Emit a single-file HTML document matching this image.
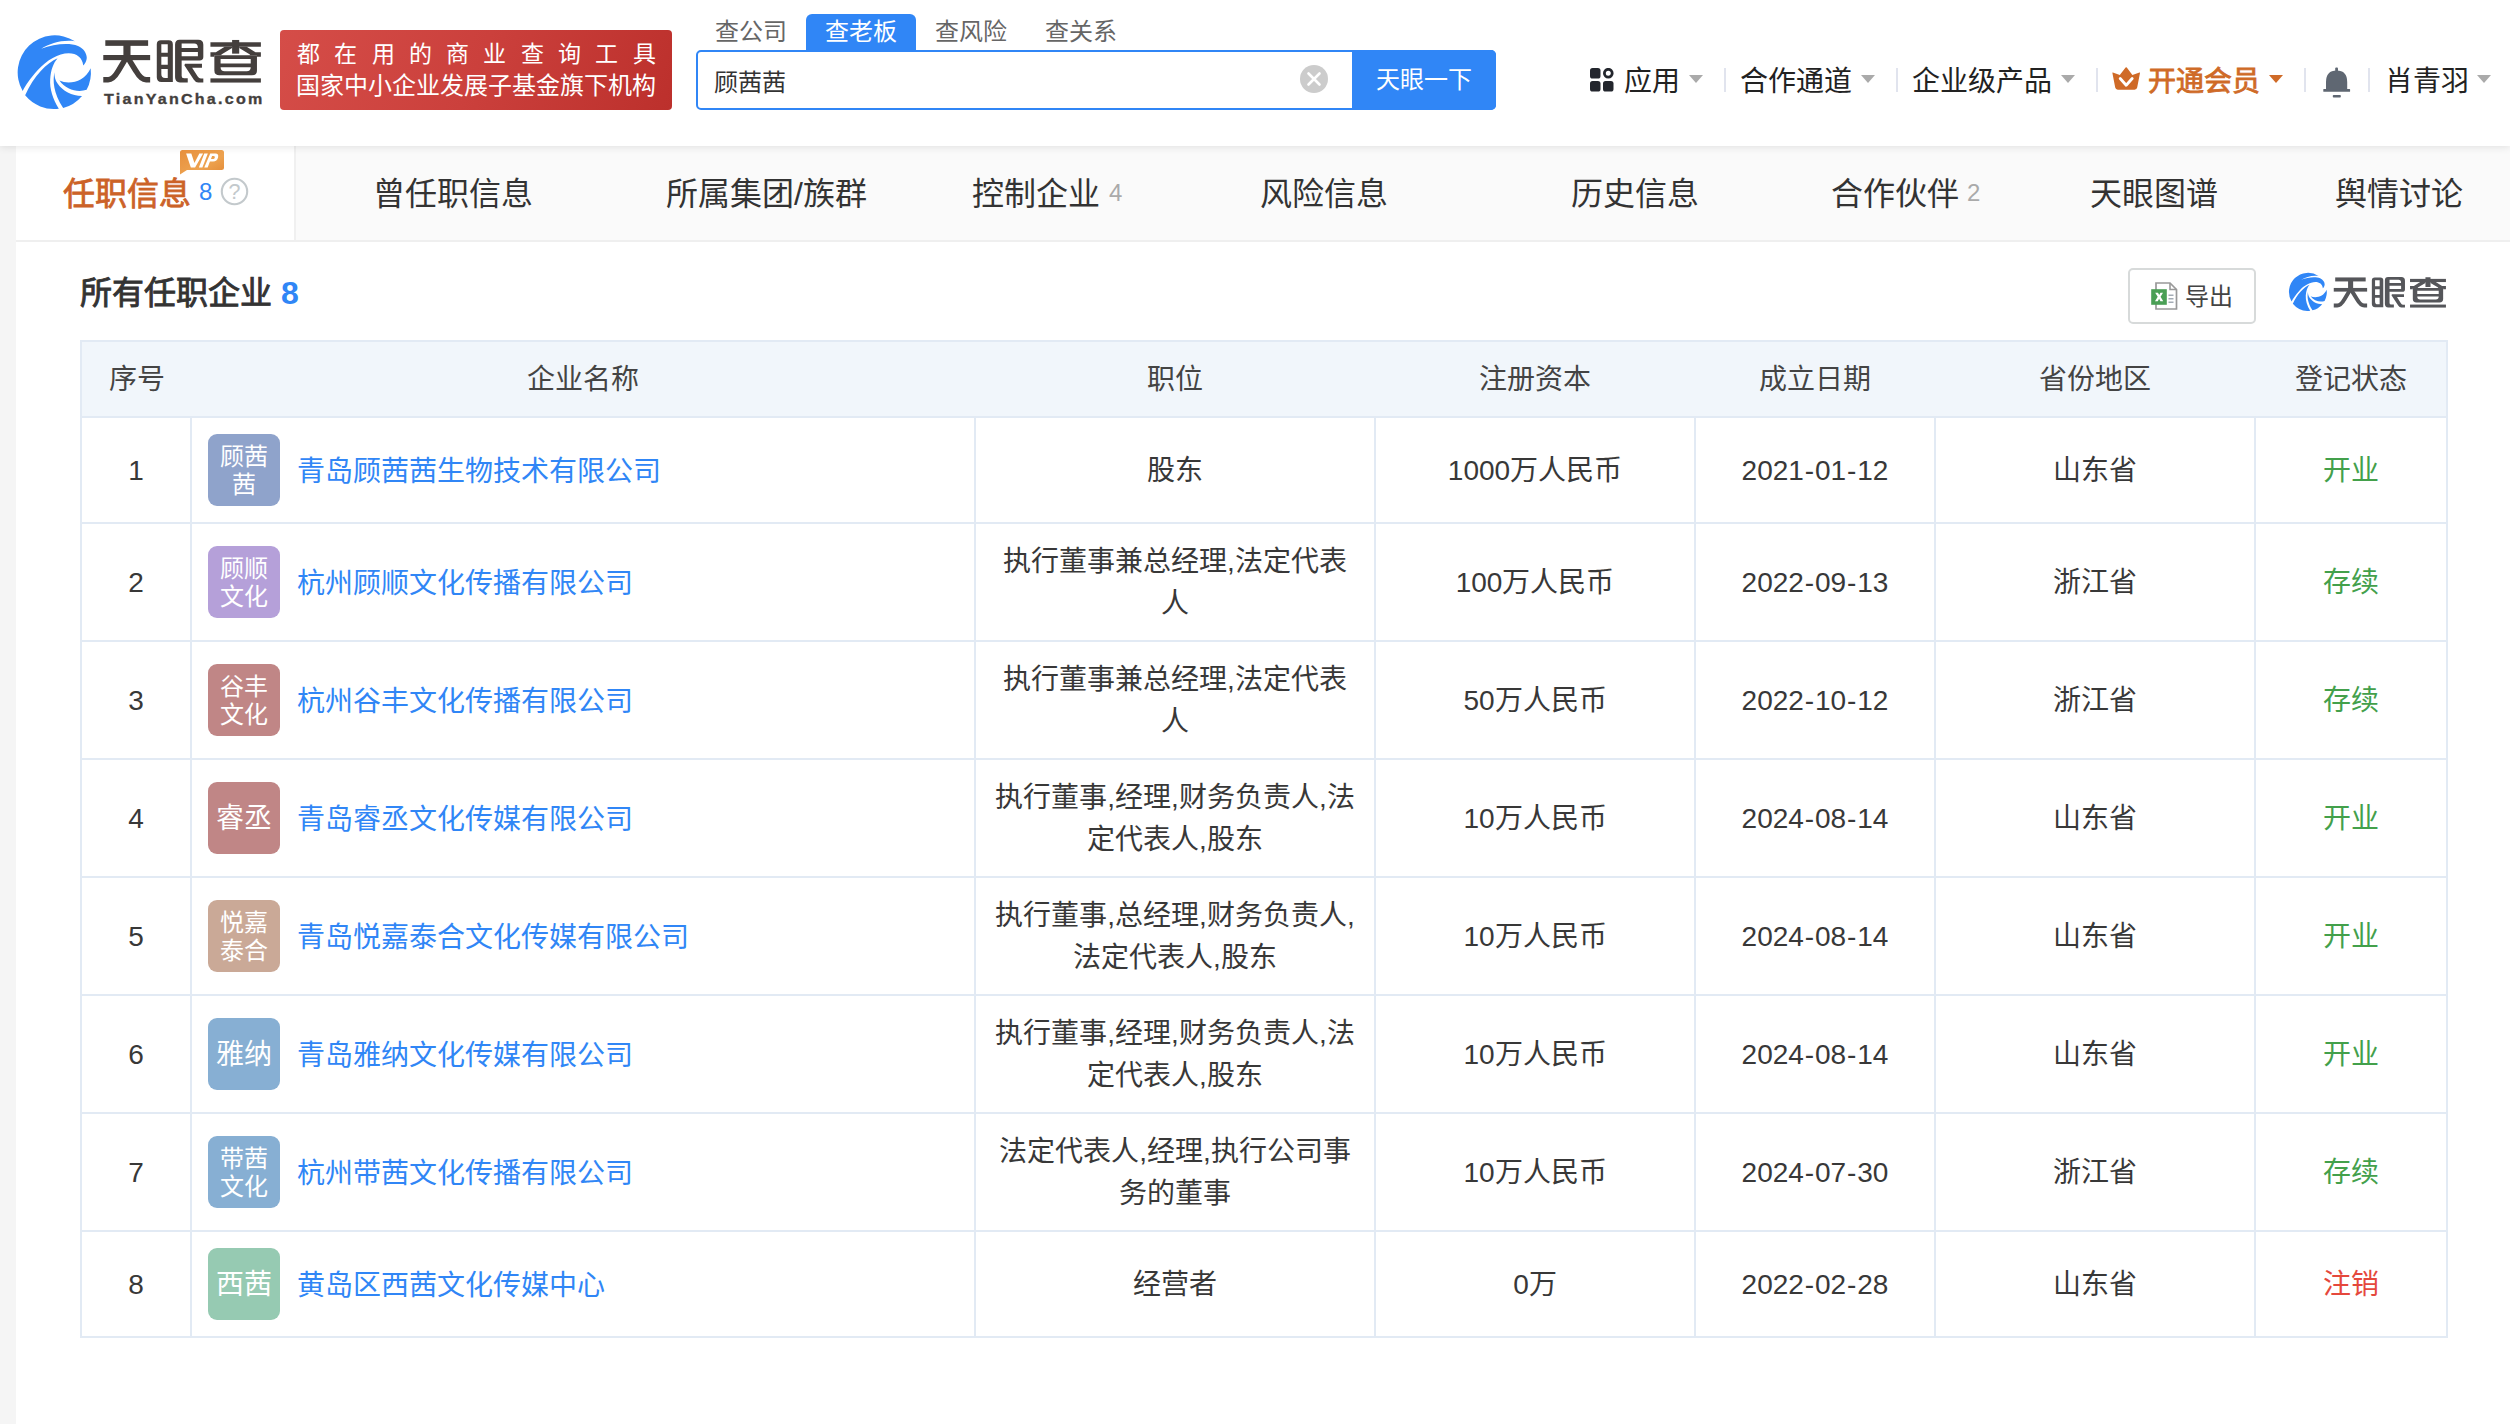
<!DOCTYPE html>
<html lang="zh-CN">
<head>
<meta charset="utf-8">
<title>天眼查</title>
<style>
*{box-sizing:border-box;margin:0;padding:0}
html,body{width:2510px;height:1424px;overflow:hidden;background:#fff}
body{font-family:"Liberation Sans",sans-serif;color:#333;position:relative;font-size:28px}
.abs{position:absolute}
.t{position:absolute;white-space:nowrap;line-height:1}
#strip{left:0;top:146px;width:16px;height:1278px;background:#f5f5f5}
#tabbar{left:16px;top:146px;width:2494px;height:96px;background:#fafafa;border-bottom:2px solid #efefef}
#tabact{left:16px;top:146px;width:280px;height:94px;background:#fff;border-right:2px solid #f0f0f0}
#hdr{left:0;top:0;width:2510px;height:146px;background:#fff;box-shadow:0 1px 8px rgba(0,0,0,.11)}
.mt{font-size:32px;color:#333;top:177.5px}
.nav{font-size:28px;color:#222;top:68px}
.sep{position:absolute;top:68px;width:2px;height:24px;background:#e1e4ee}
.caret{position:absolute;top:74.5px;width:0;height:0;border-left:7px solid transparent;border-right:7px solid transparent;border-top:8.5px solid #aaa}
.stab{position:absolute;top:14px;width:110px;height:36px;font-size:24px;line-height:36px;text-align:center;color:#666}
/* table */
#tbl{left:80px;top:340px;width:2368px;height:998px;border:2px solid #e2eaf4;border-top:none}
#thead{left:80px;top:340px;width:2368px;height:78px;background:#f1f6fb;border:2px solid #e2eaf4}
.th{position:absolute;top:342px;height:74px;padding-left:2px;line-height:76px;font-size:28px;color:#444;text-align:center;white-space:nowrap}
.row{position:absolute;left:82px;width:2364px;border-bottom:2px solid #e2eaf4}
.c{position:absolute;top:0;height:100%;padding-top:2px;display:flex;align-items:center;justify-content:center;text-align:center;font-size:28px;line-height:42px;color:#383838;white-space:nowrap;border-left:2px solid #e2eaf4}
.c.first{border-left:none}
.c1{left:0;width:108px}
.c2{left:108px;width:784px;justify-content:flex-start}
.c3{left:892px;width:400px}
.c4{left:1292px;width:320px}
.c5{left:1612px;width:240px}
.c6{left:1852px;width:320px}
.c7{left:2172px;width:192px}
.lg{position:absolute;left:16px;padding-top:2px;top:50%;margin-top:-36px;width:72px;height:72px;border-radius:9px;color:#fff;display:flex;align-items:center;justify-content:center;text-align:center;font-size:24px;line-height:28px}
.lg.one{font-size:28px}
.nm{position:absolute;left:105px;margin-top:1px;color:#3086f6;font-size:28px}
.h{margin:0 .9px}
.g{color:#43a04b}.r{color:#e5483c}
</style>
</head>
<body>
<div class="abs" id="strip"></div>
<div class="abs" id="tabbar"></div>
<div class="abs" id="tabact"></div>
<div class="abs" id="hdr"></div>

<!-- logo swirl -->
<svg class="abs" style="left:10px;top:28px" width="90" height="88" viewBox="0 0 1456 1424">
<defs><g id="swirl" fill="#3086f6">
<path d="M205 1020 A600 600 0 0 1 1050 215 C850 185 650 250 505 335 C700 262 950 232 1100 290 C1200 330 1252 430 1240 500 C1232 550 1210 580 1185 605 C1170 480 1080 410 950 410 C780 410 600 520 450 680 C330 810 250 930 205 1020Z"/>
<path d="M770 490 C600 560 380 780 245 1090 A600 600 0 0 0 790 1305 C690 1150 640 980 650 830 C660 680 700 570 770 490Z"/>
<path d="M720 715 C690 850 700 1050 860 1295 A600 600 0 0 0 1165 1100 C1000 1100 850 1020 770 900 C730 840 715 780 720 715Z"/>
<path d="M1305 650 A600 600 0 0 1 1240 1000 C1100 1050 900 1000 800 850 C950 920 1200 880 1305 650Z"/>
</g></defs>
<use href="#swirl"/>
</svg>
<!-- wordmark -->
<svg class="abs" style="left:98px;top:34px" width="170" height="76" viewBox="0 0 2510 1122">
<defs><g id="wordmark">
<!-- tian -->
<rect x="108" y="92" width="632" height="83"/>
<rect x="78" y="310" width="692" height="76"/>
<rect x="375" y="120" width="105" height="230"/>
<path d="M427 330 L300 545 Q225 675 150 675 L78 675" fill="none" stroke="currentColor" stroke-width="82"/>
<path d="M427 330 L560 545 Q635 675 710 675 L770 675" fill="none" stroke="currentColor" stroke-width="82"/>
<!-- yan left -->
<path fill-rule="evenodd" d="M928 92 H1045 Q1105 92 1105 150 V710 H935 Q868 710 868 640 V150 Q868 92 928 92Z M935 150 H1030 V275 H935Z M935 335 H1030 V455 H935Z M935 515 H1030 V650 H990 Q935 650 935 590Z"/>
<!-- yan right -->
<path fill-rule="evenodd" d="M1205 85 H1480 Q1555 85 1555 160 V340 Q1555 390 1500 390 H1235 V620 Q1235 655 1270 655 H1325 V715 H1210 Q1138 715 1138 640 V155 Q1138 85 1205 85Z M1235 140 H1420 Q1475 140 1475 205 H1235Z M1235 265 H1475 V330 H1235Z"/>
<path d="M1285 440 H1535 V497 H1390 L1470 625 Q1490 658 1520 658 H1555 V715 H1480 Q1440 715 1415 675 L1275 460Z"/>
<!-- cha -->
<rect x="1980" y="88" width="105" height="202"/>
<rect x="1660" y="122" width="745" height="66"/>
<path d="M1660 268 H1740 L1870 188 H1980 V205 L1822 303 V312 H1718 V335 H1660Z"/>
<path d="M2405 268 H2325 L2195 188 H2085 V205 L2243 303 V312 H2347 V335 H2405Z"/>
<path fill-rule="evenodd" d="M1718 312 H2347 V540 Q2347 610 2272 610 H1793 Q1718 610 1718 540Z M1810 370 V435 H2255 V370Z M1810 490 Q1810 550 1870 550 H2195 Q2255 550 2255 490Z"/>
<rect x="1660" y="655" width="745" height="62"/>
</g></defs>
<use href="#wordmark" fill="#443f3d" color="#443f3d"/>
</svg>
<div class="t" id="tyc" style="left:103.5px;top:90.5px;font-size:15px;font-weight:bold;color:#443f3d;letter-spacing:2.1px;transform:scaleX(1.07);transform-origin:0 0;-webkit-text-stroke:.35px #443f3d">TianYanCha.com</div>
<!-- slogan -->
<div class="abs" style="left:280px;top:30px;width:392px;height:80px;border-radius:4px;background:linear-gradient(112deg,#d54d48 0%,#cb403c 50%,#bc302c 100%)"></div>
<div class="t" style="left:297px;top:42.800px;font-size:23px;color:#fff;letter-spacing:14.3px">都在用的商业查询工具</div>
<div class="t" style="left:296px;top:74px;font-size:24px;color:#fff">国家中小企业发展子基金旗下机构</div>
<!-- search tabs -->
<div class="stab" style="left:696px">查公司</div>
<div class="stab" style="left:806px;background:#3086f6;color:#fff;border-radius:6px 6px 0 0">查老板</div>
<div class="stab" style="left:916px">查风险</div>
<div class="stab" style="left:1026px">查关系</div>
<!-- search box -->
<div class="abs" style="left:696px;top:50px;width:800px;height:60px;border:2px solid #3086f6;border-radius:5px;background:#fff"></div>
<div class="abs" style="left:1352px;top:50px;width:144px;height:60px;background:#3086f6;border-radius:0 5px 5px 0"></div>
<div class="t" style="left:714px;top:70.5px;font-size:24px;color:#333">顾茜茜</div>
<div class="t" style="left:1376px;top:68px;font-size:24px;color:#fff">天眼一下</div>
<svg class="abs" style="left:1299px;top:63.500px" width="30" height="30" viewBox="0 0 30 30"><circle cx="15" cy="15" r="14" fill="#ccc"/><path d="M9.5 9.5 L20.5 20.5 M20.5 9.5 L9.5 20.5" stroke="#fff" stroke-width="2.6" stroke-linecap="round"/></svg>
<!-- right nav -->
<svg class="abs" style="left:1590px;top:68px" width="24" height="24" viewBox="0 0 24 24" fill="#23262d"><rect x="0" y="0" width="10.5" height="10.5" rx="2.6"/><rect x="0" y="13" width="10.5" height="10.5" rx="2.6"/><rect x="13" y="13" width="10.5" height="10.5" rx="2.6"/><circle cx="18.3" cy="5.2" r="3.9" fill="none" stroke="#23262d" stroke-width="2.8"/></svg>
<div class="t nav" style="left:1624px">应用</div>
<div class="caret" style="left:1689px"></div>
<div class="sep" style="left:1724px"></div>
<div class="t nav" style="left:1740px">合作通道</div>
<div class="caret" style="left:1861px"></div>
<div class="sep" style="left:1896px"></div>
<div class="t nav" style="left:1912px">企业级产品</div>
<div class="caret" style="left:2061px"></div>
<div class="sep" style="left:2096px"></div>
<svg class="abs" style="left:2112px;top:66.6px" width="28.4" height="23.4" viewBox="0 0 28.4 23.4"><path fill="#cf6a27" d="M0.9 5.500 Q0.300 5.200 0.400 6 L3.200 20.600 Q3.600 22.700 5.800 22.700 H22.600 Q24.800 22.700 25.200 20.600 L28 6 Q28.100 5.200 27.500 5.500 L20.400 7.900 L14.800 0.500 Q14.200 -0.100 13.600 0.500 L7.800 7.900Z"/><path d="M8.200 11.500 L14.200 18.300 L20.200 11.500" fill="none" stroke="#fff" stroke-width="2.8" stroke-linecap="round" stroke-linejoin="round"/></svg>
<div class="t nav" style="left:2148px;color:#cf6a27;-webkit-text-stroke:.8px #cf6a27">开通会员</div>
<div class="caret" style="left:2269px;border-top-color:#cf6a27"></div>
<div class="sep" style="left:2304px"></div>
<svg class="abs" style="left:2322px;top:67px" width="30" height="32" viewBox="0 0 30 32" fill="#5f6772"><rect x="13.2" y="0.500" width="2.800" height="4" rx="1"/><path d="M4 22 V15 Q4 3.500 14.600 3.500 Q25.200 3.500 25.200 15 V22 H27.600 Q28.100 22 28.100 22.600 V24.200 Q28.100 24.800 27.600 24.800 H1.800 Q1.300 24.800 1.300 24.200 V22.600 Q1.300 22 1.800 22Z"/><rect x="10.800" y="28" width="8" height="2.500" rx=".8"/></svg>
<div class="sep" style="left:2368px"></div>
<div class="t nav" style="left:2385px">肖青羽</div>
<div class="caret" style="left:2477px"></div>


<div class="t" style="left:63px;top:177.5px;font-size:32px;color:#cc6228;-webkit-text-stroke:.8px #cc6228">任职信息</div>
<div class="t" style="left:199px;top:180px;font-size:24px;color:#3086f6">8</div>
<svg class="abs" style="left:220px;top:177px" width="30" height="30" viewBox="0 0 30 30"><circle cx="14.5" cy="14.5" r="12.7" fill="none" stroke="#c3c9cc" stroke-width="2.1"/><text x="14.5" y="22.2" text-anchor="middle" font-family="Liberation Sans, sans-serif" font-size="21.5" fill="#c3c9cc">?</text></svg>
<!-- vip badge -->
<svg class="abs" style="left:179px;top:149px" width="46" height="26" viewBox="0 0 46 26">
<defs><linearGradient id="vg" x1="0" y1="0" x2="1" y2="1"><stop offset="0" stop-color="#e78f3c"/><stop offset=".6" stop-color="#eda24f"/><stop offset="1" stop-color="#e38a36"/></linearGradient></defs>
<path d="M1 3.5 Q1 1 3.500 1 H42.5 Q45 1 45 3.5 V18.500 Q45 21 42.5 21 H8 L1 25.500Z" fill="url(#vg)"/>
<path d="M7 4.500 L12.500 4.500 L15.8 14 L21 4.500 H25 L16.5 18.500 H12Z M26.2 4.500 H30 L24.2 18.500 H20.5Z M32.5 4.500 H38 Q41.800 4.500 40.8 8.500 Q39.800 12.500 35.5 12.500 H32.2 L29.8 18.500 H26.2Z M34.5 7 L33.300 10 H35.5 Q37 10 37.400 8.500 Q37.800 7 36.200 7Z" fill="#fff" fill-rule="evenodd" transform="translate(.5 0) scale(.945 1)"/>
</svg>
<div class="t mt" style="left:373px">曾任职信息</div>
<div class="t mt" style="left:666px">所属集团/族群</div>
<div class="t mt" style="left:972px">控制企业</div>
<div class="t" style="left:1109px;top:181px;font-size:24px;color:#aaa">4</div>
<div class="t mt" style="left:1260px">风险信息</div>
<div class="t mt" style="left:1571px">历史信息</div>
<div class="t mt" style="left:1831px">合作伙伴</div>
<div class="t" style="left:1967px;top:181px;font-size:24px;color:#aaa">2</div>
<div class="t mt" style="left:2090px">天眼图谱</div>
<div class="t mt" style="left:2335px">舆情讨论</div>


<div class="t" style="left:80px;top:277px;font-size:32px;color:#333;-webkit-text-stroke:.9px #333">所有任职企业</div>
<div class="t" style="left:281px;top:276.5px;font-size:32px;color:#3086f6;font-weight:bold">8</div>
<div class="abs" style="left:2128px;top:268px;width:128px;height:56px;border:2px solid #d7dada;border-radius:5px;background:#fff"></div>
<svg class="abs" style="left:2150px;top:281px" width="30" height="30" viewBox="0 0 30 30"><path d="M6 2 H20 L26.5 8.500 V28 H6Z" fill="#fff" stroke="#999" stroke-width="1.7"/><path d="M20 2 V8.500 H26.500" fill="none" stroke="#999" stroke-width="1.600"/><path d="M18.500 14.200 H23.500 M18.500 17.700 H23.500 M18.500 21.200 H23.500" stroke="#a3acb5" stroke-width="1.500"/><rect x="1.200" y="8.200" width="15.600" height="15.600" fill="#4a9f55"/><path d="M5.200 11.700 H8 L9.200 14 L10.400 11.700 H13 L10.600 15.800 L13.200 20.300 H10.400 L9.100 17.700 L7.800 20.300 H5 L7.700 15.800Z" fill="#fff"/></svg>
<div class="t" style="left:2185px;top:284.500px;font-size:24px;color:#444">导出</div>
<svg class="abs" style="left:2285px;top:269px" width="46.5" height="45.5" viewBox="0 0 1456 1424"><use href="#swirl"/></svg>
<svg class="abs" style="left:2330px;top:272.5px" width="121" height="54.1" viewBox="0 0 2510 1122"><use href="#wordmark" fill="#55565a" color="#55565a"/></svg>

<div class="abs" id="tbl"></div>
<div class="abs" id="thead"></div>
<div class="th" style="left:82px;width:108px">序号</div>
<div class="th" style="left:190px;width:784px">企业名称</div>
<div class="th" style="left:974px;width:400px">职位</div>
<div class="th" style="left:1374px;width:320px">注册资本</div>
<div class="th" style="left:1694px;width:240px">成立日期</div>
<div class="th" style="left:1934px;width:320px">省份地区</div>
<div class="th" style="left:2254px;width:192px">登记状态</div>
<div class="row" style="top:418px;height:106px"><div class="c c1 first">1</div><div class="c c2"><div class="lg" style="background:#8fa3cb">顾茜<br>茜</div><span class="nm">青岛顾茜茜生物技术有限公司</span></div><div class="c c3"><div>股东</div></div><div class="c c4">1000万人民币</div><div class="c c5">2021<span class="h">-</span>01<span class="h">-</span>12</div><div class="c c6">山东省</div><div class="c c7 g">开业</div></div>
<div class="row" style="top:524px;height:118px"><div class="c c1 first">2</div><div class="c c2"><div class="lg" style="background:#b5a0d9">顾顺<br>文化</div><span class="nm">杭州顾顺文化传播有限公司</span></div><div class="c c3"><div>执行董事兼总经理,法定代表<br>人</div></div><div class="c c4">100万人民币</div><div class="c c5">2022<span class="h">-</span>09<span class="h">-</span>13</div><div class="c c6">浙江省</div><div class="c c7 g">存续</div></div>
<div class="row" style="top:642px;height:118px"><div class="c c1 first">3</div><div class="c c2"><div class="lg" style="background:#c08686">谷丰<br>文化</div><span class="nm">杭州谷丰文化传播有限公司</span></div><div class="c c3"><div>执行董事兼总经理,法定代表<br>人</div></div><div class="c c4">50万人民币</div><div class="c c5">2022<span class="h">-</span>10<span class="h">-</span>12</div><div class="c c6">浙江省</div><div class="c c7 g">存续</div></div>
<div class="row" style="top:760px;height:118px"><div class="c c1 first">4</div><div class="c c2"><div class="lg one" style="background:#c08686">睿丞</div><span class="nm">青岛睿丞文化传媒有限公司</span></div><div class="c c3"><div>执行董事,经理,财务负责人,法<br>定代表人,股东</div></div><div class="c c4">10万人民币</div><div class="c c5">2024<span class="h">-</span>08<span class="h">-</span>14</div><div class="c c6">山东省</div><div class="c c7 g">开业</div></div>
<div class="row" style="top:878px;height:118px"><div class="c c1 first">5</div><div class="c c2"><div class="lg" style="background:#caa997">悦嘉<br>泰合</div><span class="nm">青岛悦嘉泰合文化传媒有限公司</span></div><div class="c c3"><div>执行董事,总经理,财务负责人,<br>法定代表人,股东</div></div><div class="c c4">10万人民币</div><div class="c c5">2024<span class="h">-</span>08<span class="h">-</span>14</div><div class="c c6">山东省</div><div class="c c7 g">开业</div></div>
<div class="row" style="top:996px;height:118px"><div class="c c1 first">6</div><div class="c c2"><div class="lg one" style="background:#87afd3">雅纳</div><span class="nm">青岛雅纳文化传媒有限公司</span></div><div class="c c3"><div>执行董事,经理,财务负责人,法<br>定代表人,股东</div></div><div class="c c4">10万人民币</div><div class="c c5">2024<span class="h">-</span>08<span class="h">-</span>14</div><div class="c c6">山东省</div><div class="c c7 g">开业</div></div>
<div class="row" style="top:1114px;height:118px"><div class="c c1 first">7</div><div class="c c2"><div class="lg" style="background:#87afd3">带茜<br>文化</div><span class="nm">杭州带茜文化传播有限公司</span></div><div class="c c3"><div>法定代表人,经理,执行公司事<br>务的董事</div></div><div class="c c4">10万人民币</div><div class="c c5">2024<span class="h">-</span>07<span class="h">-</span>30</div><div class="c c6">浙江省</div><div class="c c7 g">存续</div></div>
<div class="row" style="top:1232px;height:106px"><div class="c c1 first">8</div><div class="c c2"><div class="lg one" style="background:#96cab2">西茜</div><span class="nm">黄岛区西茜文化传媒中心</span></div><div class="c c3"><div>经营者</div></div><div class="c c4">0万</div><div class="c c5">2022<span class="h">-</span>02<span class="h">-</span>28</div><div class="c c6">山东省</div><div class="c c7 r">注销</div></div>

</body>
</html>
